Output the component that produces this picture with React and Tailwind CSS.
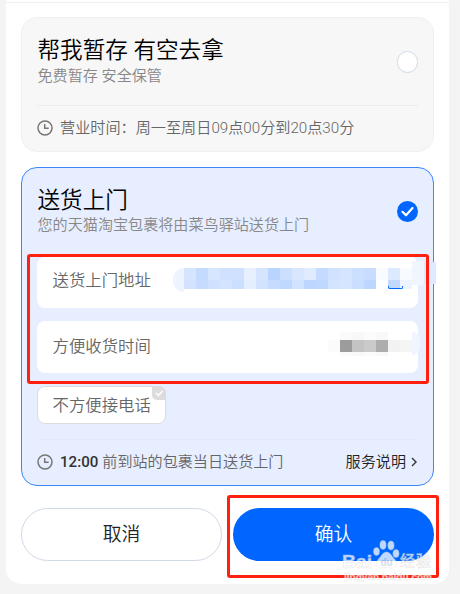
import React, { useState } from "react";

const addressMosaic = [
  ["#d6e5ff", "#c4daff", "#d6e6ff", "#cfe1ff", "#cfe1ff", "#e6f0ff", "#d5e5ff", "#b8d4ff", "#cbdfff", "#d8e7ff", "#dfebff", "#c4daff", "#d0e2ff", "#d5e5ff", "#cbdfff", "#c7dcff", "#f8fbff", "#dceaff", "#f7faff"],
  ["#d3e3ff", "#c6dbff", "#cfe1ff", "#d4e4ff", "#cbdfff", "#e3eeff", "#d3e3ff", "#c6dbff", "#bfd8ff", "#d2e3ff", "#bdd6ff", "#bfd8ff", "#d3e4ff", "#d5e5ff", "#cadeff", "#bcd6ff", "#fdfeff", "#c2d9ff", "#edf4ff"],
];

const timeMosaic = ["#fbfbfb", "#9c9c9c", "#c4c4c4", "#cacaca", "#adadad", "#f2f2f2", "#f5f5f5"];
const timeShade = ["#ffffff", "#fafafa", "#f8f8f8", "#fbfbfb", "#f8f8f8", "#ffffff", "#ffffff"];

const ClockIcon = () => (
  <svg className="w-4 h-4 shrink-0" viewBox="0 0 16 16" fill="none" stroke="#777" strokeWidth="1.5">
    <circle cx="8" cy="8" r="7" />
    <path d="M7.7 4v4.3h4" />
  </svg>
);

const Mosaic = ({ colors, height }) => (
  <div className="flex">
    {colors.map((color, i) => (
      <span key={i} className="w-3" style={{ background: color, height }} />
    ))}
  </div>
);

const Watermark = () => (
  <div className="absolute left-[343px] top-[539px] w-[92px] h-[44px] opacity-75 font-['Liberation_Sans','Noto_Sans_CJK_SC',sans-serif]">
    <svg className="w-full h-full overflow-visible" viewBox="0 0 92 44">
      <g fill="#fff" stroke="#dadada" strokeWidth="0.5">
        <text x="-1" y="28.5" fontSize="19" fontWeight="700" textLength="30" lengthAdjust="spacingAndGlyphs">Bai</text>
        <ellipse cx="33.5" cy="12.5" rx="3" ry="4" />
        <ellipse cx="40" cy="6" rx="3.1" ry="4.4" />
        <ellipse cx="48" cy="6.5" rx="3.1" ry="4.4" />
        <ellipse cx="53" cy="14.5" rx="3.1" ry="4" />
        <path d="M43.5 13c4 0 5 4 8 7s3 9-2 9c-3 0-9-1-12 0-5 0-5-6-2-9s4-7 8-7z" />
        <text x="57" y="26.5" fontSize="15" fontWeight="500" textLength="31">经验</text>
        <text x="1" y="40.5" fontSize="9" fontWeight="700" strokeWidth="0.3" textLength="88" lengthAdjust="spacingAndGlyphs">jingyan.baidu.com</text>
      </g>
      <text x="37.5" y="26.5" fontSize="10" fontWeight="700" fill="#c6d2e8" textLength="12">du</text>
    </svg>
  </div>
);

const App = () => {
  const [selected, setSelected] = useState("door");

  return (
    <div className="relative w-[460px] h-[594px] overflow-hidden bg-[#f4f4f4] pl-1.5 pr-[11px] font-['Roboto','Noto_Sans_CJK_SC',sans-serif] font-[350]">
      <div className="h-[584px] rounded-b-[15px] bg-white px-[15px] pt-[2px]">
        <div className="-mx-[15px] h-px bg-[#f0f0f0]" />

        {/* store at station */}
        <div
          onClick={() => setSelected("store")}
          className="mt-[14px] h-[135px] rounded-[16px] border border-[#f0f0f0] bg-[#f7f7f7] px-[15px]"
        >
          <div className="h-[87px] flex justify-between">
            <div className="pl-[0.5px] pt-[18px]">
              <h2 className="text-[22.6px] leading-[30px] text-black whitespace-nowrap">帮我暂存 有空去拿</h2>
              <p className="text-[15.1px] leading-[21px] text-[#888]">免费暂存 安全保管</p>
            </div>
            <span className="mt-[33px] w-[21px] h-[22px] rounded-full border border-[#d0d9e8] bg-white" />
          </div>
          <div className="h-px bg-[#ececec]" />
          <div className="h-[44px] flex items-center gap-[7px] text-[15.15px] text-[#666]">
            <ClockIcon />
            <span>营业时间：周一至周日09点00分到20点30分</span>
          </div>
        </div>

        {/* deliver to door */}
        <div
          onClick={() => setSelected("door")}
          className="mt-[15px] h-[319px] rounded-[16px] border border-[#3c86f8] bg-[#e7eeff] px-[15px]"
        >
          <div className="h-[89px] flex justify-between">
            <div className="pl-[0.5px] pt-[18px]">
              <h2 className="text-[22.6px] leading-[30px] text-black">送货上门</h2>
              <p className="text-[15.1px] leading-[19px] text-[#888]">您的天猫淘宝包裹将由菜鸟驿站送货上门</p>
            </div>
            <span className="mt-[33px] w-[21px] h-[21px] rounded-full bg-[#0066ff]">
              {selected === "door" && (
                <svg viewBox="0 0 21 21" fill="none" stroke="white" strokeWidth="2.2" strokeLinecap="round" strokeLinejoin="round">
                  <path d="M5.5 10.8l3.5 3.5 6.5-7.3" />
                </svg>
              )}
            </span>
          </div>

          <div className="h-[51px] rounded-[8px] bg-white pl-[15px] flex text-[16.4px] text-[#666]">
            <span className="w-[121px] pl-[0.5px] leading-[48px]">送货上门地址</span>
            <div className="mt-[11px] flex items-start">
              <span className="w-[11px] h-6 rounded-l-full bg-[#edf4ff]" />
              <div>
                <Mosaic colors={addressMosaic[0]} height={12} />
                <Mosaic colors={addressMosaic[1]} height={9} />
              </div>
            </div>
          </div>

          <div className="mt-[13px] h-[52px] rounded-[8px] bg-white pl-[15px] flex text-[16.4px] text-[#666]">
            <span className="w-[276px] pl-[0.5px] leading-[51px]">方便收货时间</span>
            <div className="pt-[11px]">
              <Mosaic colors={timeShade} height={8} />
              <Mosaic colors={timeMosaic} height={12} />
              <Mosaic colors={timeShade} height={4} />
            </div>
          </div>

          <div className="relative mt-[13px] w-[129px] h-[38px] rounded-[8px] border border-[#dcdcdc] bg-white pl-[14.5px] text-[16.4px] leading-[38px] text-[#666]">
            不方便接电话
            <span className="absolute -right-px -top-px w-[14px] h-[14px] rounded-tr-[7px] rounded-bl-[5px] bg-[#dcdcdc]">
              <svg viewBox="0 0 14 14" fill="none" stroke="white" strokeWidth="1.5">
                <path d="M4 7l2.4 2.5L10.5 5" />
              </svg>
            </span>
          </div>

          <div className="mt-[15px] h-px bg-[#e2e9f8]" />
          <div className="h-[44px] flex items-center text-[15.1px] text-[#666]">
            <ClockIcon />
            <span className="ml-[7px] font-medium text-[#333]">12:00</span>
            <span className="ml-1">前到站的包裹当日送货上门</span>
            <span className="ml-auto text-[#222]">服务说明</span>
            <svg className="ml-[5px] mr-px w-[6px] h-[10px]" viewBox="0 0 6 10" fill="none" stroke="#333" strokeWidth="1.4">
              <path d="M1 1l4 4-4 4" />
            </svg>
          </div>
        </div>

        <div className="mt-[22px] flex gap-[11px] text-[18.8px]">
          <button className="w-[201px] h-[53px] rounded-full border border-[#d0d9e8] bg-white pt-px text-[#222]">取消</button>
          <button className="w-[201px] h-[53px] rounded-full bg-[#0066ff] pt-px text-white">确认</button>
        </div>
      </div>

      {/* mosaic pieces that spill over the card edge */}
      <span className="absolute left-[412px] top-[261px] w-3 h-6 bg-[#f0f5ff]" />
      <span className="absolute left-[424px] top-[262px] w-3 h-[22px] bg-[#dfe9ff]" />
      <span className="absolute left-[388px] top-[286px] w-[15px] h-[3px] rounded-b-[2px] border-b border-x border-[#0066ff]" />
      <span className="absolute left-[412px] top-[332px] w-2 h-[23px] rounded-r-full bg-[#f0f5ff]" />

      {/* highlight frames */}
      <div className="absolute left-[27px] top-[254px] w-[402px] h-[130px] rounded-[3px] border-3 border-[#ff2010]" />
      <div className="absolute left-[227px] top-[495px] w-[212px] h-[83px] rounded-[3px] border-3 border-[#ff2010]" />
      <Watermark />
    </div>
  );
};

export default App;
